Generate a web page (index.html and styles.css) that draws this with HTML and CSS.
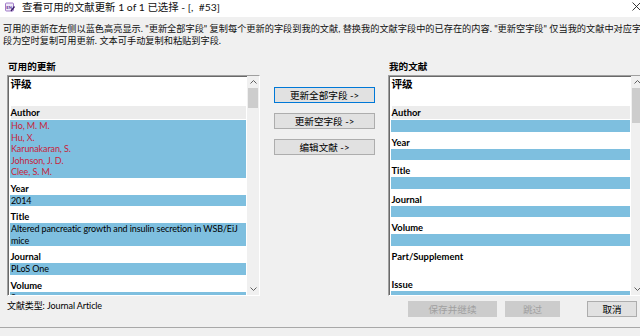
FILE: index.html
```html
<!DOCTYPE html>
<html lang="zh-CN">
<head>
<meta charset="utf-8">
<title>查看可用的文献更新</title>
<link rel="stylesheet" href="styles.css">
</head>
<body>
<div class="window">
  <header class="titlebar">
    <svg class="app-icon" width="10" height="10" viewBox="0 0 10 10">
      <rect x="0.5" y="1" width="8" height="8" rx="1" fill="#efe8f7" stroke="#8a5cbc" stroke-width="0.8"/>
      <text x="1.3" y="6.8" font-size="4.2" font-weight="bold" fill="#5b2d91" font-family="Lato, sans-serif">EN</text>
      <path d="M6 9 L9.5 4.5" stroke="#3b1d66" stroke-width="1.3"/>
    </svg>
    <span class="title">查看可用的文献更新 1 of 1 已选择 - [,&nbsp; #53]</span>
    <svg class="close" width="9" height="9" viewBox="0 0 9 9"><path d="M0.5 0.5 L8.5 8.5 M8.5 0.5 L0.5 8.5" stroke="#222" stroke-width="0.9"/></svg>
  </header>
  <p class="desc">可用的更新在左侧以蓝色高亮显示. "更新全部字段" 复制每个更新的字段到我的文献, 替换我的文献字段中的已存在的内容. "更新空字段" 仅当我的文献中对应字<br>段为空时复制可用更新. 文本可手动复制和粘贴到字段.</p>
  <div class="panes">
    <section class="pane pane-left">
      <h2 class="pane-title">可用的更新</h2>
      <div class="listbox">
        <div class="list-content">
          <div class="rating">评级</div>
          <div class="flabel current">Author</div>
          <div class="val red">Ho, M. M.<br>Hu, X.<br>Karunakaran, S.<br>Johnson, J. D.<br>Clee, S. M.</div>
          <div class="flabel">Year</div>
          <div class="val">2014</div>
          <div class="flabel">Title</div>
          <div class="val">Altered pancreatic growth and insulin secretion in WSB/EiJ<br>mice</div>
          <div class="flabel">Journal</div>
          <div class="val">PLoS One</div>
          <div class="flabel">Volume</div>
          <div class="val">9</div>
        </div>
        <div class="scrollbar">
          <div class="sb-arrow"><svg width="7" height="4" viewBox="0 0 7 4"><polyline points="0.5,3.5 3.5,0.5 6.5,3.5" fill="none" stroke="#606060" stroke-width="1"/></svg></div>
          <div class="sb-thumb short"></div>
          <div class="sb-track"></div>
          <div class="sb-arrow"><svg width="7" height="4" viewBox="0 0 7 4"><polyline points="0.5,0.5 3.5,3.5 6.5,0.5" fill="none" stroke="#606060" stroke-width="1"/></svg></div>
        </div>
      </div>
    </section>
    <div class="actions">
      <button class="btn default">更新全部字段 -&gt;</button>
      <button class="btn">更新空字段 -&gt;</button>
      <button class="btn">编辑文献 -&gt;</button>
    </div>
    <section class="pane pane-right">
      <h2 class="pane-title">我的文献</h2>
      <div class="listbox">
        <div class="list-content">
          <div class="rating">评级</div>
          <div class="flabel current">Author</div>
          <div class="val"></div>
          <div class="flabel">Year</div>
          <div class="val"></div>
          <div class="flabel">Title</div>
          <div class="val"></div>
          <div class="flabel">Journal</div>
          <div class="val"></div>
          <div class="flabel">Volume</div>
          <div class="val"></div>
          <div class="flabel">Part/Supplement</div>
          <div class="val blank"></div>
          <div class="flabel">Issue</div>
          <div class="val"></div>
        </div>
        <div class="scrollbar">
          <div class="sb-arrow"><svg width="7" height="4" viewBox="0 0 7 4"><polyline points="0.5,3.5 3.5,0.5 6.5,3.5" fill="none" stroke="#606060" stroke-width="1"/></svg></div>
          <div class="sb-thumb long"></div>
          <div class="sb-track"></div>
          <div class="sb-arrow"><svg width="7" height="4" viewBox="0 0 7 4"><polyline points="0.5,0.5 3.5,3.5 6.5,0.5" fill="none" stroke="#606060" stroke-width="1"/></svg></div>
        </div>
      </div>
    </section>
  </div>
  <footer class="footer">
    <span class="reftype">文献类型: Journal Article</span>
    <div class="footer-buttons">
      <button class="btn fbtn disabled save">保存并继续</button>
      <button class="btn fbtn disabled skip">跳过</button>
      <button class="btn fbtn cancel">取消</button>
    </div>
  </footer>
  <div class="bottomline"></div>
</div>
</body>
</html>
```

FILE: styles.css
```css
* { box-sizing: border-box; margin: 0; padding: 0; }
html, body { width: 640px; height: 336px; overflow: hidden; }
body {
  background: #f0f0f0;
  font-family: Lato, "Noto Sans CJK SC", sans-serif;
  font-size: 9.4px;
  color: #000;
}
.window {
  width: 640px;
  height: 336px;
  overflow: hidden;
  display: flex;
  flex-direction: column;
}
.titlebar {
  height: 17px;
  flex: none;
  background: #fff;
  display: flex;
  align-items: flex-start;
  padding: 2px 0 0 5px;
  position: relative;
}
.app-icon { flex: none; margin-right: 7px; }
.title { font-size: 10.4px; line-height: 11px; flex: 1; white-space: nowrap; color: #111; }
.close { position: absolute; left: 632px; top: 2px; }
.desc {
  flex: none;
  height: 42px;
  padding: 6px 0 0 3px;
  line-height: 11.5px;
  font-size: 9.2px;
  white-space: nowrap;
  color: #111;
}
.panes {
  flex: none;
  height: 237px;
  display: flex;
  padding-left: 7px;
}
.pane-left { width: 253px; flex: none; }
.pane-right { width: 256px; flex: none; margin-left: 13px; }
.pane-title {
  font-size: 9.6px;
  font-weight: bold;
  line-height: 16px;
  height: 16px;
  padding-left: 1px;
}
.listbox {
  height: 221px;
  display: flex;
  background: #fff;
  border-top: 1px solid #a0a0a0;
  border-left: 1px solid #a0a0a0;
  border-right: 1px solid #fff;
  border-bottom: 1px solid #fff;
  box-shadow: inset 1px 1px 0 #696969;
  overflow: hidden;
}
.list-content {
  flex: 1;
  min-width: 0;
  padding: 1px 1px 0 2px;
  overflow: hidden;
}
.rating {
  height: 26px;
  line-height: 14px;
  font-size: 10.6px;
  font-weight: bold;
  padding-left: 0.5px;
}
.flabel {
  height: 17px;
  padding: 4px 0 0 0.5px;
  line-height: 13px;
  font-weight: bold;
  white-space: nowrap;
}
.flabel.current {
  padding: 3px 0 1px 0.5px;
  background: #ececec;
  background-clip: content-box;
}
.val {
  background: #7ebfdf;
  line-height: 11.5px;
  min-height: 11.5px;
  padding-left: 1px;
  font-size: 9px;
  letter-spacing: -0.1px;
  white-space: nowrap;
}
.val.red { color: #c81e3c; }
.val.blank { background: transparent; }
.scrollbar {
  width: 12px;
  flex: none;
  background: #f0f0f0;
  display: flex;
  flex-direction: column;
}
.sb-arrow {
  height: 12px;
  flex: none;
  display: flex;
  align-items: center;
  justify-content: center;
}
.sb-thumb { background: #cdcdcd; margin: 0 1px; flex: none; }
.sb-thumb.short { height: 20px; }
.sb-thumb.long { height: 35px; }
.sb-track { flex: 1; }
.actions {
  width: 101px;
  flex: none;
  margin-left: 14px;
  padding-top: 28px;
  display: flex;
  flex-direction: column;
  gap: 10px;
}
.btn {
  height: 16px;
  background: #e1e1e1;
  border: 1px solid #adadad;
  font-family: inherit;
  font-size: 9.6px;
  color: #000;
  display: flex;
  align-items: center;
  justify-content: center;
  white-space: nowrap;
}
.btn.default { border-color: #0078d7; }
.footer {
  flex: none;
  height: 31px;
  display: flex;
  padding: 0 3px 0 7px;
}
.reftype { line-height: 20px; white-space: nowrap; font-size: 9px; letter-spacing: -0.1px; }
.footer-buttons { margin-left: auto; display: flex; align-items: flex-start; }
.fbtn { margin-top: 5px; }
.fbtn.disabled { background: #cccccc; border-color: #cccccc; color: #a0a0a0; }
.save { width: 89px; }
.skip { width: 55px; margin-left: 8px; }
.cancel { width: 50px; margin-left: 27px; }
.bottomline { flex: none; height: 9px; border-top: 1px solid #a8a8a8; }
```
